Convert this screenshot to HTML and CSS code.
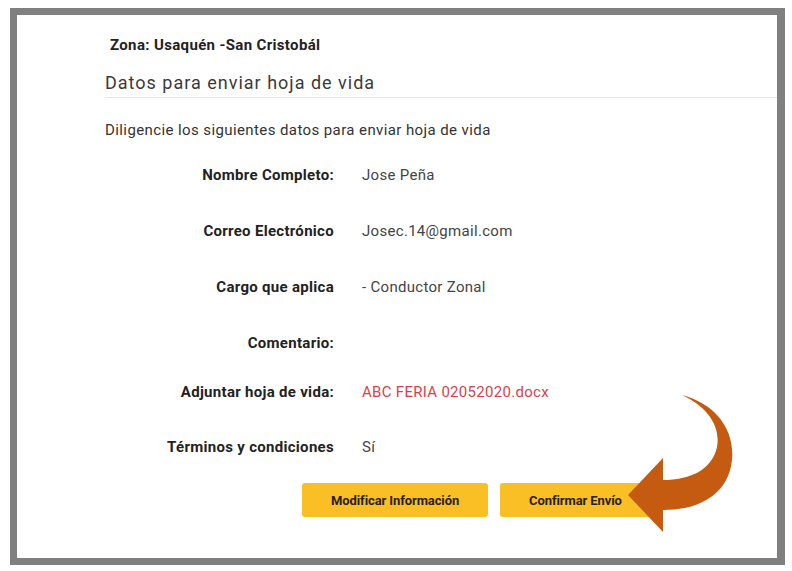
FILE: index.html
```html
<!DOCTYPE html>
<html lang="es">
<head>
<meta charset="utf-8">
<title>Datos para enviar hoja de vida</title>
<link rel="stylesheet" href="styles.css">
</head>
<body>
<div class="frame">
  <div class="content">
    <div class="zona">Zona: Usaquén -San Cristobál</div>
    <h2 class="title">Datos para enviar hoja de vida</h2>
    <p class="intro">Diligencie los siguientes datos para enviar hoja de vida</p>
    <div class="form">
      <div class="label">Nombre Completo:</div><div class="value">Jose Peña</div>
      <div class="label">Correo Electrónico</div><div class="value">Josec.14@gmail.com</div>
      <div class="label">Cargo que aplica</div><div class="value">- Conductor Zonal</div>
      <div class="label">Comentario:</div><div class="value"></div>
      <div class="label">Adjuntar hoja de vida:</div><div class="value file">ABC FERIA 02052020.docx</div>
      <div class="label">Términos y condiciones</div><div class="value">Sí</div>
    </div>
    <div class="actions">
      <button class="btn">Modificar Información</button>
      <button class="btn">Confirmar Envío</button>
    </div>
  </div>
</div>
<svg class="arrow" width="120" height="150" viewBox="620 390 120 150" xmlns="http://www.w3.org/2000/svg">
  <path d="M682 395 C716 404 735 430 732 460 C729 490 705 510 663 510 L663 532 L628 495 L663 458 L663 480 C690 480 712 470 717 447 C721 425 706 406 682 395 Z" fill="#C55A11"/>
</svg>
</body>
</html>
```
FILE: styles.css
```css
html, body {
  margin: 0;
  padding: 0;
  background: #ffffff;
}
body {
  position: relative;
  width: 792px;
  height: 571px;
  font-family: Roboto, "Liberation Sans", sans-serif;
  color: #333;
}
.frame {
  position: relative;
  margin: 8px 7px 0 10px;
  height: 543px;
  border: 7px solid #808080;
  border-right-width: 8px;
  background: #fff;
}
.content {
  padding: 22px 0 0 88px;
}
.zona {
  margin-left: 5px;
  font-size: 15px;
  font-weight: 700;
  color: #222;
  line-height: 17px;
  letter-spacing: 0.35px;
}
.title {
  margin: 18px 0 0 0;
  padding-bottom: 4px;
  font-size: 18px;
  font-weight: 400;
  color: #3a3a3a;
  line-height: 21px;
  border-bottom: 1px solid #e6e6e6;
  letter-spacing: 1px;
}
.intro {
  margin: 24px 0 0 0;
  font-size: 15px;
  line-height: 17px;
  color: #333;
  letter-spacing: 0.4px;
}
.form {
  margin-top: 8px;
  display: grid;
  grid-template-columns: 229px 1fr;
  grid-template-rows: 56px 56px 56px 56px 42px 68px;
  column-gap: 28px;
  align-items: center;
}
.label {
  text-align: right;
  font-size: 15px;
  font-weight: 700;
  color: #222;
  letter-spacing: 0.3px;
}
.value {
  font-size: 15px;
  color: #444;
  letter-spacing: 0.3px;
}
.value.file {
  color: #d93f4c;
}
.actions {
  margin: 2px 0 0 197px;
  display: flex;
  gap: 12px;
}
.btn {
  height: 34px;
  padding: 0 29px;
  border: none;
  border-radius: 3px;
  background: #fbbf26;
  font-family: Roboto, "Liberation Sans", sans-serif;
  font-size: 13px;
  font-weight: 700;
  color: #2a2218;
  letter-spacing: -0.1px;
}
.arrow {
  position: absolute;
  left: 620px;
  top: 390px;
}
```
